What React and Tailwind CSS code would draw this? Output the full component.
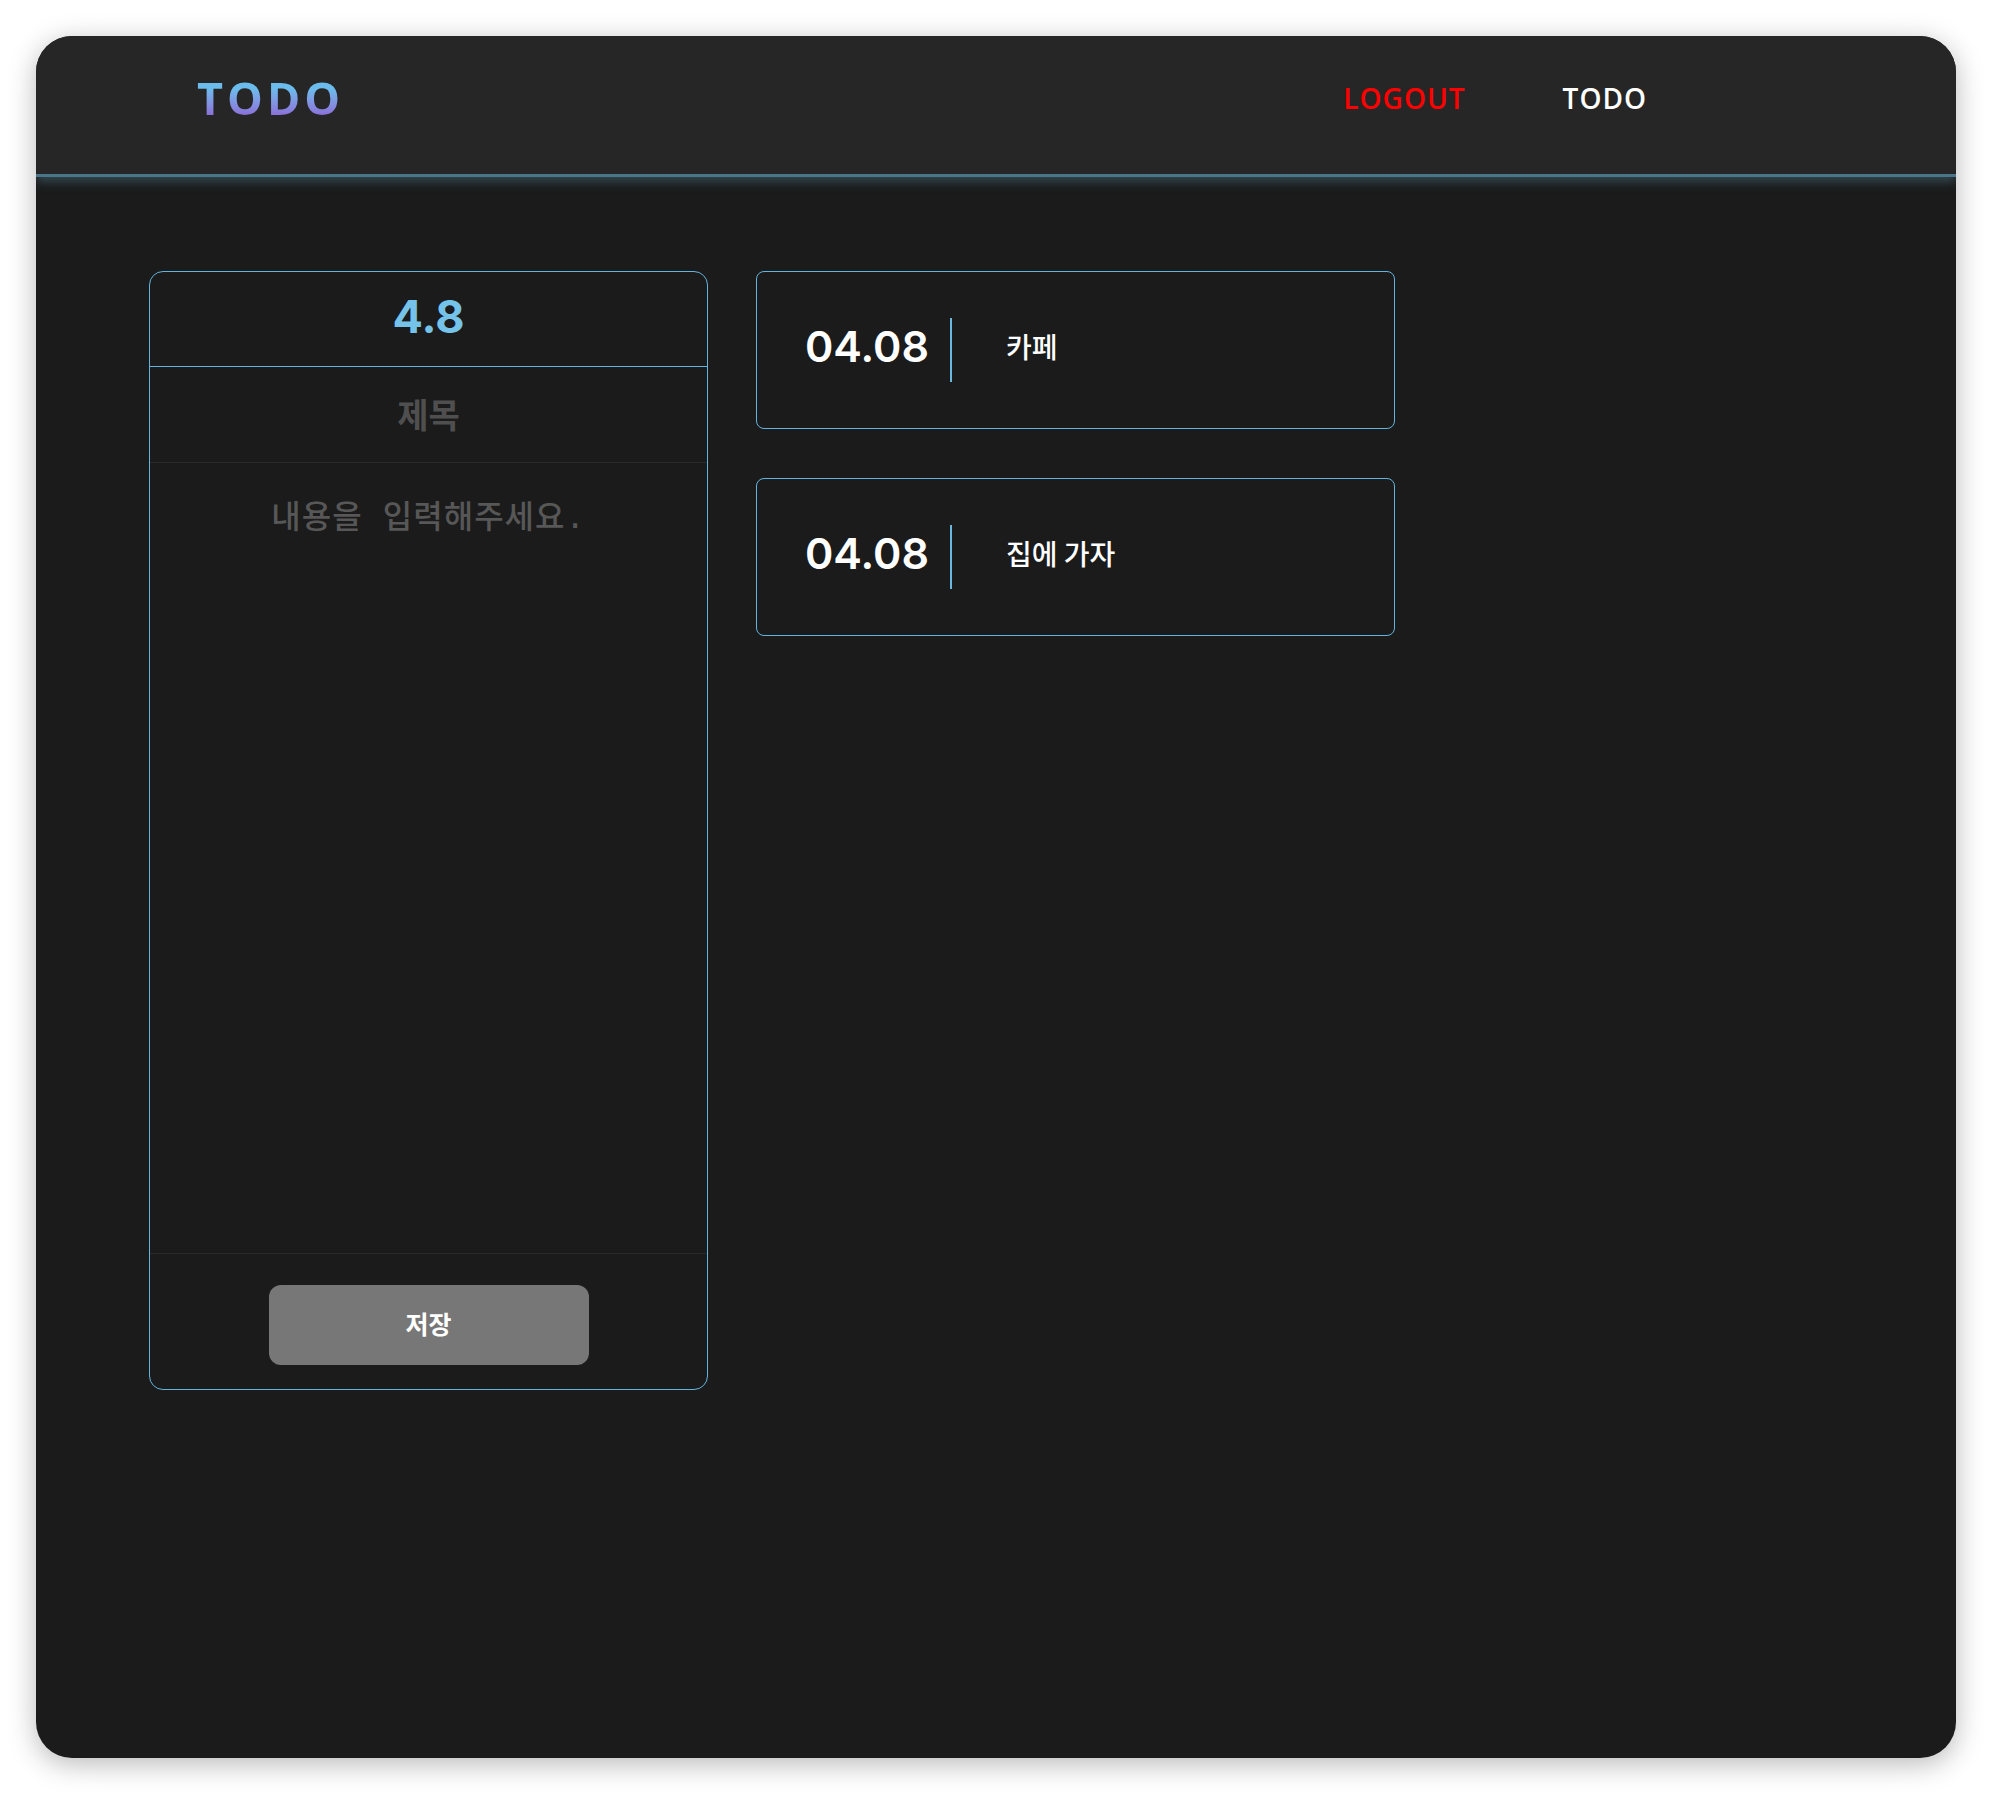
const todos = [
  { id: 1, date: '04.08', title: '카페' },
  { id: 2, date: '04.08', title: '집에 가자' },
];

function Header() {
  return (
    <header className="relative z-10 flex h-[141px] shrink-0 items-center justify-between border-b-[3px] border-[#4a7588] bg-[#262626] pb-[16px] pl-[161px] pr-[309px] shadow-[0_4px_10px_rgba(74,117,136,0.55)]">
      <h1 className="bg-linear-to-b from-[#6bbcec] from-30% to-[#8a6fd8] to-90% bg-clip-text font-['Open_Sans',sans-serif] text-[45px] font-bold leading-none tracking-[4px] text-transparent">
        TODO
      </h1>
      <nav className="flex items-center gap-[97px] pt-[2px] font-['Open_Sans',sans-serif] text-[28px] font-semibold leading-none tracking-[1px]">
        <button className="text-[#ff0000]">LOGOUT</button>
        <a className="text-white">TODO</a>
      </nav>
    </header>
  );
}

function Editor() {
  return (
    <section className="flex h-[1119px] w-[559px] shrink-0 flex-col rounded-[14px] border border-[#63b5df]">
      <div className="flex h-[95px] items-center justify-center border-b border-[#63b5df] pb-[5px] font-['Inter',sans-serif] text-[45px] font-bold text-[#76c3ea]">
        4.8
      </div>
      <input
        placeholder="제목"
        className="h-[96px] border-b border-[#2a2a2a] bg-transparent pb-[2px] text-center text-[34px] font-bold text-white outline-none placeholder:text-[#4f4f4f]"
      />
      <textarea
        placeholder="내용을 입력해주세요."
        className="flex-1 resize-none bg-transparent px-6 pt-[30px] text-center font-['DejaVu_Sans_Mono','Noto_Sans_CJK_KR',monospace] text-[32px] font-medium leading-[1.5] tracking-[1px] text-white outline-none placeholder:text-[#575757]"
      />
      <div className="flex h-[136px] shrink-0 justify-center border-t border-[#2a2a2a] pt-[31px]">
        <button className="h-[80px] w-[320px] rounded-[12px] bg-[#777777] pb-[3px] text-[25px] font-bold text-white">
          저장
        </button>
      </div>
    </section>
  );
}

function TodoCard({ date, title }) {
  return (
    <div className="flex h-[158px] items-center rounded-[8px] border border-[#63b5df] pl-[48px]">
      <span className="mb-[8px] font-['Inter',sans-serif] text-[43px] font-semibold leading-none text-white">{date}</span>
      <span className="ml-[21px] h-[64px] w-[2px] bg-[#6bb8df]" />
      <span className="mb-[8px] ml-[54px] text-[28px] font-medium leading-none text-white">{title}</span>
    </div>
  );
}

export default function App() {
  return (
    <div className="min-h-screen bg-white p-[36px] font-['Noto_Sans_CJK_KR',sans-serif]">
      <div className="flex h-[1722px] flex-col overflow-hidden rounded-[36px] bg-[#1b1b1b] shadow-[0_6px_28px_rgba(0,0,0,0.28)]">
        <Header />
        <main className="flex items-start gap-[48px] pl-[113px] pt-[94px]">
          <Editor />
          <div className="flex w-[639px] flex-col gap-[49px]">
            {todos.map((t) => (
              <TodoCard key={t.id} date={t.date} title={t.title} />
            ))}
          </div>
        </main>
      </div>
    </div>
  );
}
